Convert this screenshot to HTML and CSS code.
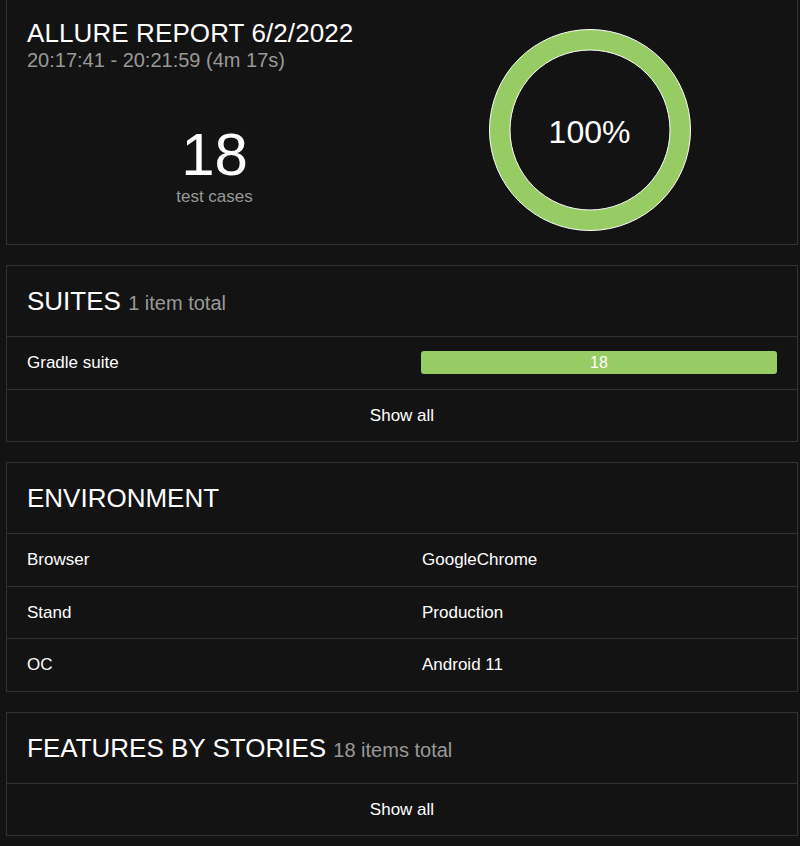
FILE: index.html
```html
<!DOCTYPE html>
<html lang="en">
<head>
<meta charset="utf-8">
<title>Allure Report</title>
<link rel="stylesheet" href="styles.css">
</head>
<body>
<div class="page">
  <section class="card summary">
    <div class="summary-left">
      <h1 class="report-title">ALLURE REPORT 6/2/2022</h1>
      <div class="report-time">20:17:41 - 20:21:59 (4m 17s)</div>
      <div class="stat">
        <div class="stat-num">18</div>
        <div class="stat-label">test cases</div>
      </div>
    </div>
    <div class="summary-right">
      <div class="donut">
        <svg width="226" height="226" viewBox="0 0 226 226">
          <path d="M113 11.5a100.5 100.5 0 1 1 0 201a100.5 100.5 0 1 1 0 -201z M113 32a80 80 0 1 0 0 160a80 80 0 1 0 0 -160z" fill="#97cc64" fill-rule="evenodd" stroke="#ffffff" stroke-width="1"/>
        </svg>
        <span class="donut-label">100%</span>
      </div>
    </div>
  </section>

  <section class="card">
    <h2 class="card-head">SUITES <span class="count">1 item total</span></h2>
    <div class="row">
      <div class="cell">Gradle suite</div>
      <div class="cell"><div class="bar">18</div></div>
    </div>
    <div class="row show-all">Show all</div>
  </section>

  <section class="card">
    <h2 class="card-head">ENVIRONMENT</h2>
    <div class="row">
      <div class="cell">Browser</div>
      <div class="cell">GoogleChrome</div>
    </div>
    <div class="row">
      <div class="cell">Stand</div>
      <div class="cell">Production</div>
    </div>
    <div class="row">
      <div class="cell">OC</div>
      <div class="cell">Android 11</div>
    </div>
  </section>

  <section class="card">
    <h2 class="card-head">FEATURES BY STORIES <span class="count">18 items total</span></h2>
    <div class="row show-all">Show all</div>
  </section>
</div>
</body>
</html>
```

FILE: styles.css
```css
html, body {
  margin: 0;
  padding: 0;
  background: #131313;
  color: #ffffff;
  font-family: "Liberation Sans", Arial, sans-serif;
}

.page {
  padding: 0 2px 0 6px;
  display: flex;
  flex-direction: column;
  gap: 20px;
}

.card {
  border: 1px solid #333333;
  background: #131313;
}

.summary {
  margin-top: -3px;
  padding: 20px 20px 0;
  display: grid;
  grid-template-columns: 1fr 1fr;
}

.summary-left {
  display: flex;
  flex-direction: column;
}

.report-title {
  margin: 0;
  font-size: 26px;
  line-height: 30px;
  font-weight: normal;
  letter-spacing: 0.1px;
}

.report-time {
  font-size: 20px;
  line-height: 24px;
  color: #999999;
}

.stat {
  margin-top: 53px;
  text-align: center;
}

.stat-num {
  font-size: 60px;
  line-height: 60px;
}

.stat-label {
  margin-top: 2px;
  font-size: 17px;
  line-height: 20px;
  color: #999999;
}

.summary-right {
  display: flex;
  justify-content: center;
}

.donut {
  position: relative;
  width: 226px;
  height: 226px;
}

.donut svg {
  display: block;
}

.donut-label {
  position: absolute;
  left: 0;
  right: 0;
  top: 96px;
  text-align: center;
  font-size: 32px;
  line-height: 36px;
}

.card-head {
  margin: 0;
  padding: 20px;
  font-size: 26px;
  line-height: 30px;
  height: 30px;
  font-weight: normal;
}

.count {
  font-size: 20px;
  line-height: 1;
  color: #999999;
}

.row {
  display: grid;
  grid-template-columns: 1fr 1fr;
  border-top: 1px solid #333333;
  font-size: 17px;
  line-height: 19.4px;
}

.cell {
  padding: 16px 20px;
}

.bar {
  margin: -2px 0 -1px -1px;
  height: 23px;
  border-radius: 3px;
  background: #97cc64;
  color: #ffffff;
  font-size: 16px;
  line-height: 23px;
  text-align: center;
}

.show-all {
  display: block;
  padding: 16px 20px;
  text-align: center;
}
```
